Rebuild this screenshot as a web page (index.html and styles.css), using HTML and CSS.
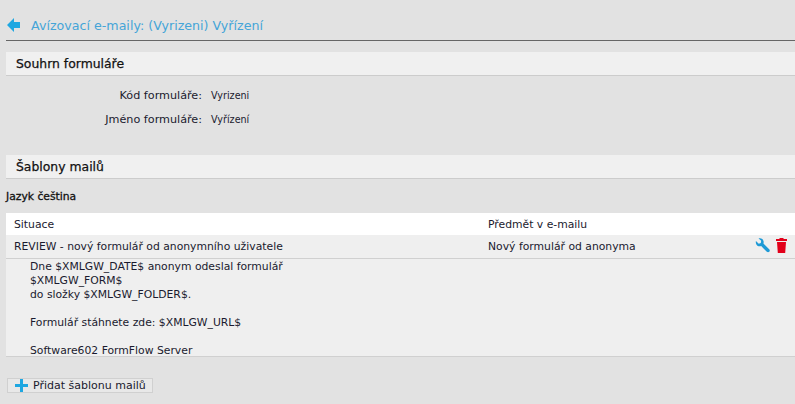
FILE: index.html
```html
<!DOCTYPE html>
<html lang="cs">
<head>
<meta charset="utf-8">
<title>Avízovací e-maily</title>
<link rel="stylesheet" href="styles.css">
</head>
<body>
<header class="title-bar">
  <svg class="back-icon" width="13" height="14" viewBox="0 0 13 14"><path d="M0 7 L7 0 V4 H13 V10 H7 V14 Z" fill="#1ea7e1"/></svg>
  <h1 class="title">Avízovací e-maily: (Vyrizeni) Vyřízení</h1>
</header>

<section class="section summary">
  <h2 class="section-head">Souhrn formuláře</h2>
  <dl class="info">
    <dt>Kód formuláře:</dt><dd>Vyrizeni</dd>
    <dt>Jméno formuláře:</dt><dd>Vyřízení</dd>
  </dl>
</section>

<section class="section templates">
  <h2 class="section-head">Šablony mailů</h2>
  <h3 class="lang">Jazyk čeština</h3>
  <div class="table">
    <div class="row head-row"><span class="col-a">Situace</span><span class="col-b">Předmět v e-mailu</span></div>
    <div class="row data-row">
      <span class="col-a">REVIEW - nový formulář od anonymního uživatele</span>
      <span class="col-b">Nový formulář od anonyma</span>
      <span class="actions">
        <svg width="15" height="15" viewBox="0 0 16 16"><path d="M1 3.2 L4 6 L6.2 5.2 L6.6 3 L3.8 .6 C6 -.2 8.8 1 9.2 3.6 C9.3 4.6 9.2 5.2 9 5.8 L15.4 12.2 C16 13 15.8 14 15.2 14.7 C14.4 15.4 13.4 15.4 12.6 14.7 L6.6 8.6 C5.8 8.9 4.8 9 3.8 8.7 C1.6 8 .4 5.6 1 3.2 Z" fill="#1e9ad6"/></svg>
        <svg width="11" height="15" viewBox="0 0 11 15"><path d="M3.5 0 H7.5 V1 H11 V3 H0 V1 H3.5 Z M1 4 H10 L9.2 15 H1.8 Z" fill="#e2001a"/></svg>
      </span>
    </div>
    <div class="body-text">Dne $XMLGW_DATE$ anonym odeslal formulář
$XMLGW_FORM$
do složky $XMLGW_FOLDER$.

Formulář stáhnete zde: $XMLGW_URL$

Software602 FormFlow Server</div>
  </div>
  <button class="add-btn" type="button">
    <svg width="13" height="13" viewBox="0 0 13 13"><path d="M5 0 H8 V5 H13 V8 H8 V13 H5 V8 H0 V5 H5 Z" fill="#1ea7e1"/></svg>
    <span>Přidat šablonu mailů</span>
  </button>
</section>
</body>
</html>
```
FILE: styles.css
```css
* { box-sizing: border-box; }
html, body { margin: 0; height: 100%; }
body {
  background: #e2e2e2;
  font-family: "DejaVu Sans", sans-serif;
  font-size: 10.8px;
  color: #1a1a2e;
  padding: 0 0 0 6px;
  overflow: hidden;
}
.title-bar {
  display: flex;
  align-items: center;
  gap: 11px;
  height: 41px;
  padding-top: 10px;
  border-bottom: 1px solid #666;
}
.back-icon { margin-left: 1px; }
.title { margin: 0; font-size: 12.65px; font-weight: normal; color: #45a5d8; }
.section-head {
  margin: 0;
  height: 24px;
  line-height: 23px;
  padding-left: 10px;
  font-size: 12.4px;
  font-weight: normal;
  -webkit-text-stroke: .25px #111;
  background: #f0f0f0;
  border-bottom: 1px solid #ccc;
  color: #111;
}
.summary { margin-top: 11px; }
.info {
  display: grid;
  grid-template-columns: 196px 1fr;
  column-gap: 9px;
  row-gap: 10px;
  margin: 13px 0 0;
  line-height: 14px;
}
.info dt { text-align: right; font-size: 11.2px; }
.info dd { margin: 0; font-size: 9.6px; }
.templates { margin-top: 28px; }
.lang { margin: 11px 0 9px; font-size: 10.75px; font-weight: normal; -webkit-text-stroke: .3px #111; line-height: 14px; color: #111; }
.table { background: #efefef; border-bottom: 1px solid #d0d0d0; }
.row { display: flex; align-items: center; }
.head-row { background: #fff; height: 22px; }
.data-row { height: 24px; border-bottom: 1px solid #d0d0d0; }
.col-a { width: 482px; padding-left: 8px; }
.col-b { flex: 1; }
.actions { display: flex; gap: 6px; align-items: center; padding-right: 8px; margin-bottom: 2px; }
.body-text {
  white-space: pre-wrap;
  padding: 1px 0 0 24px;
  line-height: 14px;
  height: 97px;
}
.add-btn {
  display: inline-flex;
  align-items: center;
  gap: 5px;
  margin: 21px 0 0 1px;
  height: 15px;
  padding: 0 6px 0 7px;
  background: #e8e8e8;
  border: 1px solid #d0d0d0;
  font: inherit;
  font-size: 11px;
  color: inherit;
}
```
